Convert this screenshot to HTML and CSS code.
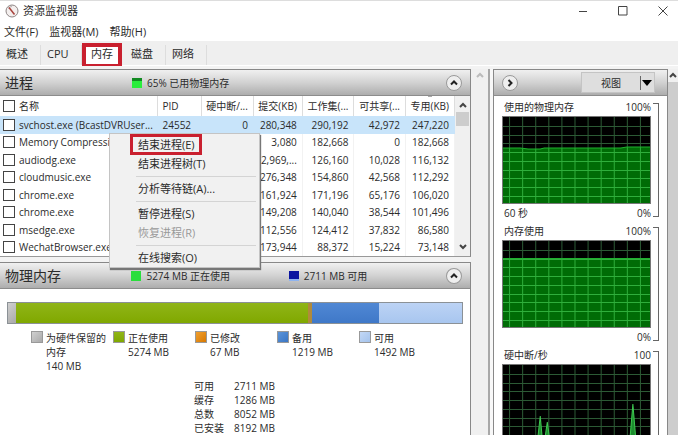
FILE: index.html
```html
<!DOCTYPE html>
<html lang="zh-CN">
<head>
    <meta charset="UTF-8">
    <meta name="viewport" content="width=device-width, initial-scale=1">
    <title>资源监视器</title>
    <link rel="stylesheet" href="styles.css">
</head>
<body>
<div class="window">
    <header class="titlebar">
        <svg class="app-icon" viewBox="0 0 14 14" width="14" height="14">
            <circle cx="7" cy="7" r="6" fill="#f4efee" stroke="#8d8585"/>
            <path d="M3 4.500A5 5 0 0 1 7 2.500" fill="none" stroke="#b9b2b2"/>
            <path d="M4 3.500L9.500 10.500" stroke="#a8423c" stroke-width="1.500"/>
        </svg>
        <h1>资源监视器</h1>
        <div class="window-buttons">
            <button type="button" aria-label="最小化"><svg viewBox="0 0 10 10" width="10" height="10"><path d="M1 5.500h8"/></svg></button>
            <button type="button" aria-label="最大化"><svg viewBox="0 0 10 10" width="10" height="10"><path d="M.5.5h8.500v8.500H.5z"/></svg></button>
            <button type="button" aria-label="关闭"><svg viewBox="0 0 10 10" width="10" height="10"><path d="M.5.5l9 9M9.500.5l-9 9"/></svg></button>
        </div>
    </header>

    <nav class="menubar">
        <a href="#">文件(F)</a>
        <a href="#">监视器(M)</a>
        <a href="#">帮助(H)</a>
    </nav>

    <nav class="tabs">
        <a href="#">概述</a>
        <a href="#">CPU</a>
        <a href="#" class="active">内存</a>
        <a href="#">磁盘</a>
        <a href="#">网络</a>
    </nav>

    <div class="content">
        <main class="main">
            <!-- Processes -->
            <section class="panel processes">
                <div class="panel-header">
                    <h2>进程</h2>
                    <span class="stat"><i class="led green-dark"></i>65% 已用物理内存</span>
                    <button type="button" class="round" aria-label="折叠"><svg viewBox="0 0 8 8" width="8" height="8"><path d="M1 5.500l3-3 3 3"/></svg></button>
                </div>
                <div class="list">
                    <table class="process-table">
                        <colgroup>
                            <col class="col-name"><col class="col-pid"><col><col><col><col><col>
                        </colgroup>
                        <thead>
                        <tr>
                            <th><label><input type="checkbox">名称</label></th>
                            <th>PID</th>
                            <th>硬中断/...</th>
                            <th>提交(KB)</th>
                            <th>工作集(...</th>
                            <th>可共享(...</th>
                            <th class="sorted">专用(KB)</th>
                        </tr>
                        </thead>
                        <tbody>
                        <tr class="selected"><td><label><input type="checkbox">svchost.exe (BcastDVRUser...</label></td><td>24552</td><td>0</td><td>280,348</td><td>290,192</td><td>42,972</td><td>247,220</td></tr>
                        <tr><td><label><input type="checkbox">Memory Compression</label></td><td></td><td></td><td>3,080</td><td>182,668</td><td>0</td><td>182,668</td></tr>
                        <tr><td><label><input type="checkbox">audiodg.exe</label></td><td></td><td></td><td>2,969,...</td><td>126,160</td><td>10,028</td><td>116,132</td></tr>
                        <tr><td><label><input type="checkbox">cloudmusic.exe</label></td><td></td><td></td><td>276,348</td><td>154,860</td><td>42,568</td><td>112,292</td></tr>
                        <tr><td><label><input type="checkbox">chrome.exe</label></td><td></td><td></td><td>161,924</td><td>171,196</td><td>65,176</td><td>106,020</td></tr>
                        <tr><td><label><input type="checkbox">chrome.exe</label></td><td></td><td></td><td>149,208</td><td>140,040</td><td>38,544</td><td>101,496</td></tr>
                        <tr><td><label><input type="checkbox">msedge.exe</label></td><td></td><td></td><td>112,556</td><td>124,412</td><td>37,832</td><td>86,580</td></tr>
                        <tr><td><label><input type="checkbox">WechatBrowser.exe</label></td><td></td><td></td><td>173,944</td><td>88,372</td><td>15,224</td><td>73,148</td></tr>
                        </tbody>
                    </table>
                    <div class="scrollbar list-scroll">
                        <svg viewBox="0 0 8 8" width="8" height="8"><path d="M1 6l3-3 3 3"/></svg>
                        <div class="thumb"></div>
                        <svg viewBox="0 0 8 8" width="8" height="8"><path d="M1 2l3 3 3-3"/></svg>
                    </div>
                </div>

                <!-- Context menu of the selected process -->
                <div class="context-menu" role="menu">
                    <button type="button" role="menuitem" class="marked">结束进程(E)</button>
                    <button type="button" role="menuitem">结束进程树(T)</button>
                    <hr>
                    <button type="button" role="menuitem">分析等待链(A)...</button>
                    <hr>
                    <button type="button" role="menuitem">暂停进程(S)</button>
                    <button type="button" role="menuitem" disabled>恢复进程(R)</button>
                    <hr>
                    <button type="button" role="menuitem">在线搜索(O)</button>
                </div>
            </section>

            <!-- Physical memory -->
            <section class="panel memory">
                <div class="panel-header">
                    <h2>物理内存</h2>
                    <span class="stat"><i class="led"></i>5274 MB 正在使用</span>
                    <span class="stat"><i class="led blue"></i>2711 MB 可用</span>
                    <button type="button" class="round" aria-label="折叠"><svg viewBox="0 0 8 8" width="8" height="8"><path d="M1 5.500l3-3 3 3"/></svg></button>
                </div>
                <div class="memory-bar">
                    <div class="reserved" style="flex-grow: 140"></div>
                    <div class="in-use" style="flex-grow: 5274"></div>
                    <div class="modified" style="flex-grow: 67"></div>
                    <div class="standby" style="flex-grow: 1219"></div>
                    <div class="free" style="flex-grow: 1492"></div>
                </div>
                <ul class="legend">
                    <li><i class="reserved"></i><span>为硬件保留的<br>内存<br>140 MB</span></li>
                    <li><i class="in-use"></i><span>正在使用<br>5274 MB</span></li>
                    <li><i class="modified"></i><span>已修改<br>67 MB</span></li>
                    <li><i class="standby"></i><span>备用<br>1219 MB</span></li>
                    <li><i class="free"></i><span>可用<br>1492 MB</span></li>
                </ul>
                <table class="totals">
                    <tr><th>可用</th><td>2711 MB</td></tr>
                    <tr><th>缓存</th><td>1286 MB</td></tr>
                    <tr><th>总数</th><td>8052 MB</td></tr>
                    <tr><th>已安装</th><td>8192 MB</td></tr>
                </table>
            </section>
        </main>

        <div class="scrollbar main-scroll">
            <svg viewBox="0 0 8 8" width="8" height="8"><path d="M1 6l3-3 3 3"/></svg>
        </div>

        <aside class="charts">
            <div class="panel-header">
                <button type="button" class="round" aria-label="隐藏图表"><svg viewBox="0 0 8 8" width="8" height="8"><path d="M2.500 1l3 3-3 3"/></svg></button>
                <button type="button" class="view"><span>视图</span><svg viewBox="0 0 10 6" width="10" height="6"><path d="M0 0h10L5 6z"/></svg></button>
            </div>

            <svg class="defs" width="0" height="0">
                <defs>
                    <path id="grid" d="M7.500 0v88M20.500 0v88M33.500 0v88M46.500 0v88M59.500 0v88M72.500 0v88M85.500 0v88M98.500 0v88M111.500 0v88M124.500 0v88M137.500 0v88M0 10.500h148M0 19.500h148M0 27.500h148M0 36.500h148M0 45.500h148M0 54.500h148M0 62.500h148M0 71.500h148M0 80.500h148"/>
                    <clipPath id="used"><path d="M0 32h18l8 1h12l4-1h76l6-1h24v57H0z"/></clipPath>
                    <clipPath id="commit"><path d="M0 18h148v70H0z"/></clipPath>
                </defs>
            </svg>

            <figure class="chart">
                <figcaption><span>使用的物理内存</span><span>100%</span></figcaption>
                <svg class="plot" viewBox="0 0 148 88" preserveAspectRatio="none">
                    <use href="#grid" class="grid"/>
                    <g clip-path="url(#used)">
                        <rect class="area" width="148" height="88"/>
                        <use href="#grid" class="grid bright"/>
                    </g>
                    <path class="line" d="M0 32h18l8 1h12l4-1h76l6-1h24"/>
                </svg>
                <div class="axis"><span>60 秒</span><span>0%</span></div>
            </figure>
            <figure class="chart">
                <figcaption><span>内存使用</span><span>100%</span></figcaption>
                <svg class="plot" viewBox="0 0 148 88" preserveAspectRatio="none">
                    <use href="#grid" class="grid"/>
                    <g clip-path="url(#commit)">
                        <rect class="area" width="148" height="88"/>
                        <use href="#grid" class="grid bright"/>
                    </g>
                    <path class="line" d="M0 18.500h148"/>
                </svg>
                <div class="axis"><span></span><span>0%</span></div>
            </figure>
            <figure class="chart">
                <figcaption><span>硬中断/秒</span><span>100</span></figcaption>
                <svg class="plot" viewBox="0 0 148 88" preserveAspectRatio="none">
                    <use href="#grid" class="grid"/>
                    <path class="spike" d="M34 88l4-36 3 34 4-28 4 30zM126 88l4-48 4 48z"/>
                </svg>
                <div class="axis"></div>
            </figure>
        </aside>

        <div class="scrollbar side-scroll">
            <svg viewBox="0 0 8 8" width="8" height="8"><path d="M1 6l3-3 3 3"/></svg>
            <div class="thumb"></div>
        </div>
    </div>
</div>
</body>
</html>
```

FILE: styles.css
```css
* {
    box-sizing: border-box;
}
body {
    margin: 0;
    font-family: "Open Sans", "Noto Sans CJK SC", sans-serif;
    font-size: 10px;
    line-height: 14px;
    color: #2b2b2b;
    background: #fff;
}
h1, h2, figure, ul {
    margin: 0;
    padding: 0;
    font-weight: normal;
}
a {
    color: inherit;
    text-decoration: none;
}
button {
    font: inherit;
    color: inherit;
    padding: 0;
    border: 0;
    background: none;
}
svg {
    display: block;
    fill: none;
    stroke: #444;
}
.window {
    display: flex;
    flex-direction: column;
    height: 100vh;
    overflow: hidden;
    border-top: 1px solid #ddd;
}

/* Title and menus */
.titlebar {
    display: flex;
    align-items: center;
    height: 20px;
    padding: 0 10px 0 5px;
    gap: 4px;
}
.titlebar h1 {
    flex: 1;
    font-size: 11px;
}
.window-buttons {
    display: flex;
    gap: 30px;
}
.menubar {
    display: flex;
    gap: 11px;
    height: 20px;
    padding-left: 4px;
    font-size: 11px;
    line-height: 22px;
}
.tabs {
    display: flex;
    flex: none;
    height: 25px;
    padding-top: 4px;
    background: #efefef;
    border-bottom: 1px solid #fff;
    font-size: 11px;
    line-height: 17px;
}
.tabs a {
    width: 41px;
    padding-left: 6px;
    border-right: 1px solid #ddd;
}
.tabs .active {
    width: 40px;
    height: 25px;
    margin: -2px 3px 0 0;
    padding: 0;
    text-align: center;
    line-height: 14px;
    background: #fff;
    border: 4px solid #c9202f;
}

/* Body of the window */
.content {
    display: flex;
    flex: 1;
    min-height: 0;
    padding-top: 3px;
    background: #f3f3f3;
}
.main {
    display: flex;
    flex-direction: column;
    flex: 1;
    min-width: 0;
}
.panel {
    background: #fff;
    border-right: 1px solid #888;
}
.panel-header {
    display: flex;
    align-items: center;
    height: 27px;
    padding: 0 8px 0 5px;
    border-top: 1px solid #888;
    border-bottom: 1px solid #8c8c8c;
    background: linear-gradient(#f0f0f0, #d2d2d2 50%, #adadad);
}
.panel-header h2 {
    width: 127px;
    font-size: 14px;
}
.stat {
    display: flex;
    align-items: center;
    gap: 5px;
    width: 158px;
}
.led {
    width: 10px;
    height: 10px;
    background: #2ade3c;
}
.led.green-dark {
    background: linear-gradient(#128a22 30%, #2aee3c 30%);
}
.led.blue {
    background: linear-gradient(#0a14a0 80%, #8fb4f0 80%);
}
.round {
    display: grid;
    place-items: center;
    width: 16px;
    height: 16px;
    margin-left: auto;
    border: 1px solid #999;
    border-radius: 50%;
    background: #eee;
}
.round svg {
    stroke: #222;
    stroke-width: 2;
}

/* Process list */
.processes {
    position: relative;
    border-bottom: 1px solid #999;
    margin-bottom: 5px;
}
.list {
    display: flex;
}
.process-table {
    flex: 1;
    min-width: 0;
    height: 160px;
    table-layout: fixed;
    border-collapse: collapse;
}
.col-name {
    width: 157px;
}
.col-pid {
    width: 44px;
}
.process-table th, .process-table td {
    padding: 0 5px 0 0;
    text-align: right;
    font-weight: normal;
    white-space: nowrap;
    overflow: hidden;
    border-right: 1px solid #f2f2f2;
}
.process-table th {
    height: 20px;
    border-color: #ddd;
}
.process-table th:nth-child(-n+2), .process-table td:nth-child(-n+2) {
    text-align: left;
    padding: 0 0 0 5px;
}
.process-table th:first-child, .process-table td:first-child {
    padding-left: 3px;
}
.process-table label {
    display: flex;
    align-items: center;
    gap: 4px;
}
.process-table input {
    appearance: none;
    flex: none;
    width: 12px;
    height: 12px;
    margin: 0;
    border: 1px solid #444;
    background: #fff;
}
.process-table .selected td {
    background: #c8e4fa;
    border-color: #c8e4fa;
}
.process-table .sorted {
    background: linear-gradient(#aaa, #aaa) no-repeat 50% 0 / 4px 1px;
}
.scrollbar {
    display: flex;
    flex-direction: column;
    align-items: center;
    background: #f0f0f0;
}
.scrollbar svg {
    flex: none;
    stroke-width: 2;
}
.list-scroll {
    width: 15px;
    padding: 5px 0;
}
.list-scroll .thumb {
    width: 13px;
    height: 14px;
    margin: 3px 0 auto;
    background: #cdcdcd;
}

/* Context menu */
.context-menu {
    position: absolute;
    left: 109px;
    top: 64px;
    width: 151px;
    padding-top: 1px;
    background: #f1f1f1;
    border: 1px solid #c4c4c4;
    box-shadow: 1px 2px 1px #777;
}
.context-menu button {
    display: block;
    width: 100%;
    height: 19px;
    padding-left: 28px;
    text-align: left;
    font-size: 11px;
    line-height: 19px;
}
.context-menu button:disabled {
    color: #999;
}
.context-menu .marked {
    width: 70px;
    margin-left: 21px;
    padding-left: 7px;
    outline: 3px solid #c9202f;
    outline-offset: -2px;
}
.context-menu hr {
    height: 1px;
    margin: 3px 3px 2px 26px;
    border: 0;
    background: #d4d4d4;
}

/* Physical memory */
.memory {
    flex: 1;
}
.memory-bar {
    display: flex;
    height: 22px;
    margin: 13px 7px 7px;
    border: 1px solid #8b9196;
}
.reserved {
    background: linear-gradient(135deg, #d0d0d0, #a9a9a9);
}
.in-use {
    background: linear-gradient(#90b518, #80a800);
}
.modified {
    background: linear-gradient(135deg, #f0a030, #d87800);
}
.standby {
    background: linear-gradient(135deg, #5c94d8, #3a76c4);
}
.free {
    background: linear-gradient(135deg, #c3d8f6, #a5c3ec);
}
.memory-bar .modified {
    background: #b08a3c;
}
.memory-bar .standby {
    background: linear-gradient(#5088d4, #3f78c8);
}
.memory-bar .free {
    background: linear-gradient(#bcd3f5, #a8c6ef);
}
.legend {
    display: flex;
    margin-left: 31px;
    list-style: none;
}
.legend li {
    display: flex;
    gap: 3px;
    width: 82px;
    white-space: nowrap;
}
.legend i {
    flex: none;
    width: 12px;
    height: 12px;
    border: 1px solid #999;
}
.totals {
    margin: 6px 0 0 194px;
    border-collapse: collapse;
}
.totals th, .totals td {
    padding: 0;
    font-weight: normal;
    text-align: left;
}
.totals td {
    padding-left: 10px;
}

/* Charts */
.main-scroll {
    width: 17px;
    padding-top: 2px;
}
.main-scroll svg {
    stroke: #bbb;
}
.charts {
    width: 180px;
    padding-left: 3px;
    border-left: 2px solid #a8a8a8;
    background: #f8f8f8;
}
.charts .panel-header {
    padding: 0 12px 0 8px;
    border-left: 1px solid #888;
    border-right: 1px solid #888;
}
.charts .round {
    margin: 0;
}
.view {
    display: flex;
    align-items: center;
    width: 74px;
    height: 21px;
    margin-left: auto;
    background: #dedede;
    border: 1px solid #c4c4c4;
}
.view span {
    flex: 1;
    text-align: center;
    border-right: 1px solid #666;
}
.view svg {
    margin: 0 2px 0 1px;
    fill: #000;
    stroke: none;
}
.defs {
    position: absolute;
}
.chart {
    position: relative;
    padding: 0 16px 0 8px;
    border-left: 1px solid #888;
    border-right: 1px solid #888;
    background: #fff;
}
.chart:first-of-type {
    padding-top: 2px;
}
/* bracket beside the plot */
.chart::after {
    content: "";
    position: absolute;
    right: 8px;
    bottom: 5px;
    width: 5px;
    height: 112px;
    border: 1px solid #666;
    border-left: 0;
}
.chart figcaption, .axis {
    display: flex;
    justify-content: space-between;
    height: 18px;
    padding-left: 2px;
    line-height: 18px;
}
.plot {
    width: 100%;
    height: 88px;
    background: #000;
    outline: 1px solid #777;
    outline-offset: -1px;
}
.grid {
    stroke: #2c5a35;
}
.bright {
    stroke: #2fae3c;
}
.area {
    fill: #006c06;
    stroke: none;
}
.line {
    stroke: #20b030;
}
.spike {
    fill: #1c8c2e;
    stroke: #3ec850;
}
.side-scroll {
    width: 10px;
    padding-top: 2px;
}
.side-scroll .thumb {
    flex: 1;
    width: 100%;
    margin-top: 3px;
    background: #cdcdcd;
}
```
